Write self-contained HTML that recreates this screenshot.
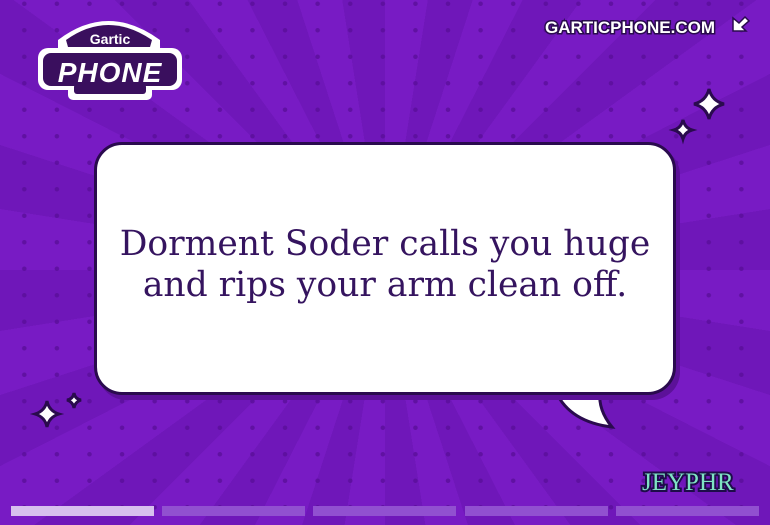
<!DOCTYPE html>
<html><head><style>
html,body{margin:0;padding:0}
body{width:770px;height:525px;overflow:hidden;position:relative;background:#7419bf;font-family:"Liberation Sans",sans-serif}
.rays{position:absolute;inset:0;background:repeating-conic-gradient(from 0deg at 385px 270px,#781bc4 0deg 9deg,#6f17b9 9deg 18deg)}
.dots{position:absolute;inset:0;background-image:radial-gradient(circle,#5a0e9a 2px,transparent 2.5px);background-size:32.6px 26.5px;background-position:8px 17px;opacity:.8}
.bubble{position:absolute;left:94px;top:142px;width:576px;height:247px;background:#fff;border:3px solid #2a0b4e;border-radius:28px;box-shadow:4px 5px 0 #5c1199;display:flex;align-items:center;justify-content:center;text-align:center;color:#35145f;font-family:"DejaVu Serif","Liberation Serif",serif;font-size:34.5px;line-height:41px}
.bubble div{margin-top:-8px}
.bar{position:absolute;top:506px;height:10px;width:143px;background:#9150d0}
</style></head><body>
<div class="rays"></div><div class="dots"></div>
<svg style="position:absolute;left:0;top:0" width="770" height="525">
<path d="M556 392 Q570 422 612 427 Q598 410 600 392 Z" fill="#fff" stroke="#2a0b4e" stroke-width="3"/>
<g fill="#fff" stroke="#2a0b4e" stroke-width="3">
<path d="M709 89 Q712 101 724 104 Q712 107 709 119 Q706 107 694 104 Q706 101 709 89Z"/>
<path d="M683 120 Q685 128 692 130 Q685 132 683 139 Q681 132 674 130 Q681 128 683 120Z"/>
<path d="M47 401 Q49 411 59 414 Q49 417 47 427 Q45 417 35 414 Q45 411 47 401Z"/>
<path d="M74 393 Q75 399 81 400 Q75 402 74 408 Q73 402 67 400 Q73 399 74 393Z"/>
</g>
<g>
<path d="M58 40 Q108 2 160 40 L160 52 L58 52Z" fill="#fff"/>
<path d="M66 40 Q108 10 152 40 L150 47 L68 47Z" fill="#3a0f5e"/>
<rect x="38" y="48" width="144" height="42" rx="10" fill="#fff"/>
<rect x="68" y="80" width="84" height="20" rx="5" fill="#fff"/>
<rect x="74" y="84" width="72" height="10" rx="3" fill="#3a0f5e"/>
<rect x="43" y="53" width="134" height="33" rx="8" fill="#3a0f5e"/>
<text x="110" y="44" text-anchor="middle" font-family="Liberation Sans" font-weight="bold" font-size="14" fill="#fff">Gartic</text>
<text x="110" y="82" text-anchor="middle" font-family="Liberation Sans" font-weight="bold" font-style="italic" font-size="28" fill="#fff" letter-spacing="1">PHONE</text>
</g>
<text x="545" y="33" font-family="Liberation Sans" font-weight="bold" font-size="17" fill="#fff" stroke="#2a0b4e" stroke-width="3" paint-order="stroke">GARTICPHONE.COM</text>
<path d="M733 18 L733 31 L746 31 L742 27 L749 21 L745 17 L739 23 Z" fill="#fff" stroke="#2a0b4e" stroke-width="1.5"/>
<text x="642" y="490" font-family="Liberation Serif" font-size="25" fill="#7fe3c4" stroke="#1e0c4a" stroke-width="4" paint-order="stroke">JEYPHR</text>
</svg>
<div class="bubble"><div>Dorment Soder calls you huge<br>and rips your arm clean off.</div></div>
<div class="bar" style="left:11px;background:#d7c0ee"></div>
<div class="bar" style="left:162px"></div>
<div class="bar" style="left:313px"></div>
<div class="bar" style="left:465px"></div>
<div class="bar" style="left:616px"></div>
</body></html>
